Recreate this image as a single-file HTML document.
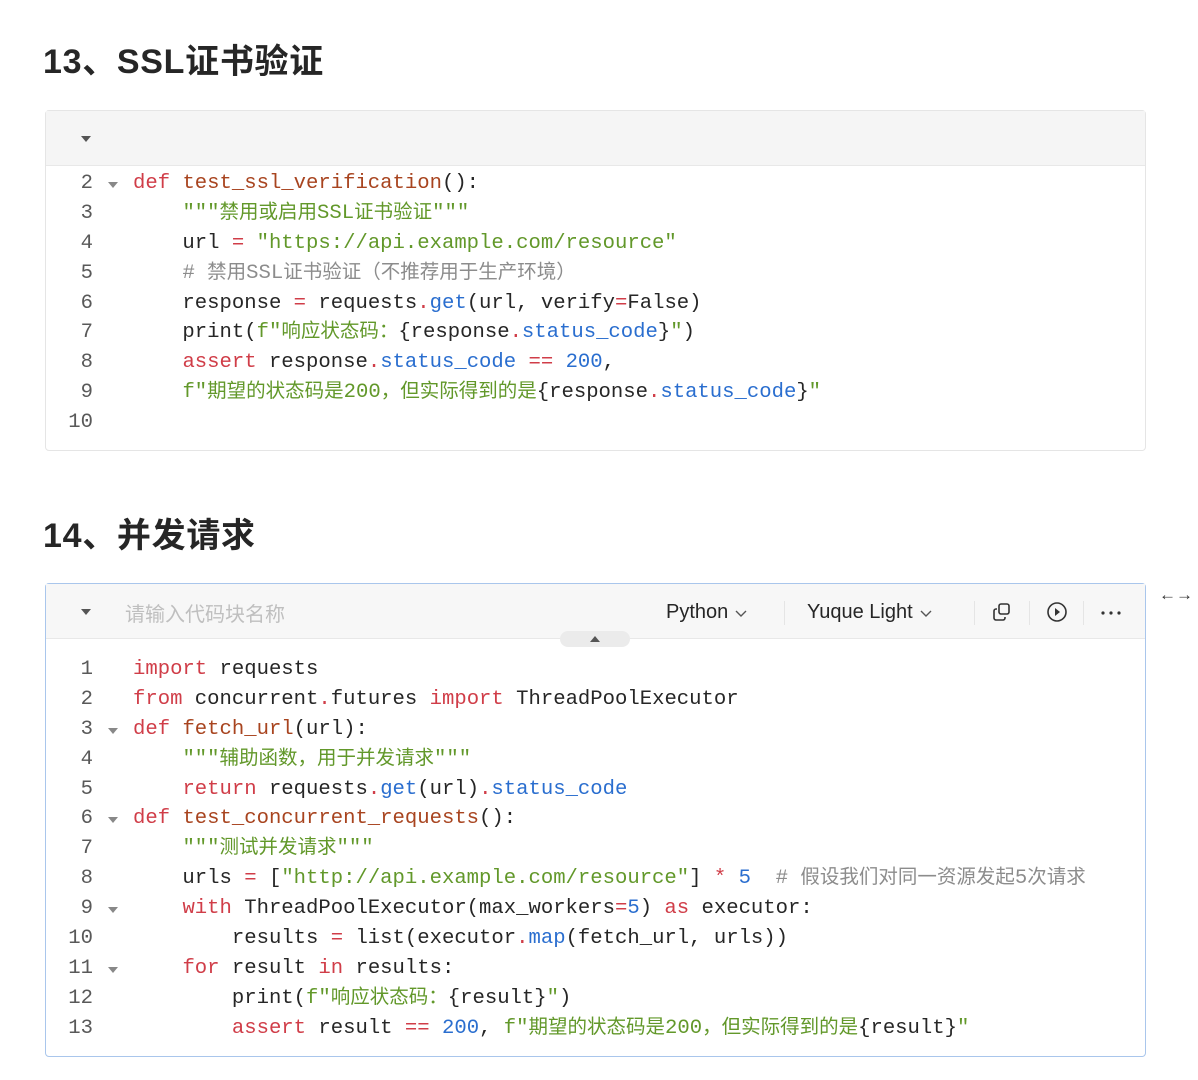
<!DOCTYPE html>
<html><head><meta charset="utf-8"><style>
*{margin:0;padding:0;box-sizing:border-box}
body{width:1198px;height:1080px;background:#fff;position:relative;overflow:hidden;font-family:"Liberation Sans","Noto Sans CJK SC",sans-serif;color:#262626}
h2{position:absolute;left:43px;font-size:34px;font-weight:bold;letter-spacing:0.7px}
.blk{position:absolute;left:45px;width:1101px;border:1px solid #e5e5e5;border-radius:4px;background:#fff}
.hd{height:55px;background:#f5f5f5;border-bottom:1px solid #e8e8e8;position:relative}
.tri{position:absolute;left:35px;top:25px;width:0;height:0;border-left:5px solid transparent;border-right:5px solid transparent;border-top:6px solid #555}
.code{font-family:"Liberation Mono","Noto Sans CJK SC",monospace;font-size:20.6px;position:relative}
.ln{height:29.9px;line-height:29.9px;position:relative;white-space:pre}
.n{position:absolute;left:0;width:47px;text-align:right;color:#595959}
.f{position:absolute;left:62px;top:13px;border-left:5px solid transparent;border-right:5px solid transparent;border-top:6px solid #888}
.t{position:absolute;left:87px;color:#262626}
.k{color:#d03d48}.fn{color:#a8441f}.s{color:#62982a}.b{color:#2a6ecf}.c{color:#8c8c8c}
.cj{font-family:"Noto Sans CJK SC",sans-serif;font-size:19.5px;line-height:1}
.chev{display:inline-block;vertical-align:middle;margin-left:6px}
</style></head><body>
<h2 style="top:34px">13、SSL证书验证</h2>
<div class="blk" style="top:110px;height:341px">
<div class="hd"><div class="tri"></div></div>
<div class="code" style="padding-top:3px"><div class="ln"><span class="n">2</span><span class="f"></span><span class="t"><span class="k">def</span> <span class="fn">test_ssl_verification</span>():</span></div><div class="ln"><span class="n">3</span><span class="t">    <span class="s">"""<span class="cj">禁用或启用</span>SSL<span class="cj">证书验证</span>"""</span></span></div><div class="ln"><span class="n">4</span><span class="t">    url <span class="k">=</span> <span class="s">"https://api.example.com/resource"</span></span></div><div class="ln"><span class="n">5</span><span class="t">    <span class="c"># <span class="cj">禁用</span>SSL<span class="cj">证书验证（不推荐用于生产环境）</span></span></span></div><div class="ln"><span class="n">6</span><span class="t">    response <span class="k">=</span> requests<span class="k">.</span><span class="b">get</span>(url, verify<span class="k">=</span>False)</span></div><div class="ln"><span class="n">7</span><span class="t">    print(<span class="s">f"<span class="cj">响应状态码：</span></span>{response<span class="k">.</span><span class="b">status_code</span>}<span class="s">"</span>)</span></div><div class="ln"><span class="n">8</span><span class="t">    <span class="k">assert</span> response<span class="k">.</span><span class="b">status_code</span> <span class="k">==</span> <span class="b">200</span>,</span></div><div class="ln"><span class="n">9</span><span class="t">    <span class="s">f"<span class="cj">期望的状态码是</span>200<span class="cj">，但实际得到的是</span></span>{response<span class="k">.</span><span class="b">status_code</span>}<span class="s">"</span></span></div><div class="ln"><span class="n">10</span></div></div></div>

<h2 style="top:508px">14、并发请求</h2>
<div class="blk" style="top:583px;height:474px;border-color:#a9c6ec">
<div class="hd" style="background:#f7f7f7">
<div class="tri"></div>
<div style="position:absolute;left:79px;top:14px;font-size:20px;color:#bfbfbf">请输入代码块名称</div>
<div style="position:absolute;left:620px;top:16px;font-size:20px;line-height:24px;color:#262626">Python<svg class="chev" width="14" height="10" viewBox="0 0 14 10"><path d="M2 3l5 5 5-5" fill="none" stroke="#555" stroke-width="1.4"/></svg></div>
<div style="position:absolute;left:738px;top:17px;width:1px;height:24px;background:#e5e5e5"></div>
<div style="position:absolute;left:761px;top:16px;font-size:20px;line-height:24px;color:#262626">Yuque Light<svg class="chev" width="14" height="10" viewBox="0 0 14 10"><path d="M2 3l5 5 5-5" fill="none" stroke="#555" stroke-width="1.4"/></svg></div>
<div style="position:absolute;left:928px;top:17px;width:1px;height:24px;background:#e5e5e5"></div>
<svg style="position:absolute;left:946px;top:18px" width="20" height="20" viewBox="0 0 20 20" fill="none" stroke="#333" stroke-width="1.6"><rect x="7" y="2" width="10" height="10" rx="2"/><path d="M5 7H4a2 2 0 0 0-2 2v7a2 2 0 0 0 2 2h7a2 2 0 0 0 2-2v-1"/></svg>
<div style="position:absolute;left:983px;top:17px;width:1px;height:24px;background:#e5e5e5"></div>
<svg style="position:absolute;left:1000px;top:17px" width="22" height="22" viewBox="0 0 22 22"><circle cx="11" cy="11" r="9" fill="none" stroke="#333" stroke-width="1.6"/><path d="M9 7l5 4-5 4z" fill="#333"/></svg>
<div style="position:absolute;left:1037px;top:17px;width:1px;height:24px;background:#e5e5e5"></div>
<svg style="position:absolute;left:1054px;top:26px" width="22" height="6" viewBox="0 0 22 6"><circle cx="3" cy="3" r="1.6" fill="#333"/><circle cx="11" cy="3" r="1.6" fill="#333"/><circle cx="19" cy="3" r="1.6" fill="#333"/></svg>
<div style="position:absolute;left:514px;top:47px;width:70px;height:16px;border-radius:8px;background:#ebebeb"><div style="position:absolute;left:30px;top:5px;border-left:5px solid transparent;border-right:5px solid transparent;border-bottom:6px solid #555"></div></div>
</div>
<div class="code" style="padding-top:16px"><div class="ln"><span class="n">1</span><span class="t"><span class="k">import</span> requests</span></div><div class="ln"><span class="n">2</span><span class="t"><span class="k">from</span> concurrent<span class="k">.</span>futures <span class="k">import</span> ThreadPoolExecutor</span></div><div class="ln"><span class="n">3</span><span class="f"></span><span class="t"><span class="k">def</span> <span class="fn">fetch_url</span>(url):</span></div><div class="ln"><span class="n">4</span><span class="t">    <span class="s">"""<span class="cj">辅助函数，用于并发请求</span>"""</span></span></div><div class="ln"><span class="n">5</span><span class="t">    <span class="k">return</span> requests<span class="k">.</span><span class="b">get</span>(url)<span class="k">.</span><span class="b">status_code</span></span></div><div class="ln"><span class="n">6</span><span class="f"></span><span class="t"><span class="k">def</span> <span class="fn">test_concurrent_requests</span>():</span></div><div class="ln"><span class="n">7</span><span class="t">    <span class="s">"""<span class="cj">测试并发请求</span>"""</span></span></div><div class="ln"><span class="n">8</span><span class="t">    urls <span class="k">=</span> [<span class="s">"http://api.example.com/resource"</span>] <span class="k">*</span> <span class="b">5</span>  <span class="c"># <span class="cj">假设我们对同一资源发起</span>5<span class="cj">次请求</span></span></span></div><div class="ln"><span class="n">9</span><span class="f"></span><span class="t">    <span class="k">with</span> ThreadPoolExecutor(max_workers<span class="k">=</span><span class="b">5</span>) <span class="k">as</span> executor:</span></div><div class="ln"><span class="n">10</span><span class="t">        results <span class="k">=</span> list(executor<span class="k">.</span><span class="b">map</span>(fetch_url, urls))</span></div><div class="ln"><span class="n">11</span><span class="f"></span><span class="t">    <span class="k">for</span> result <span class="k">in</span> results:</span></div><div class="ln"><span class="n">12</span><span class="t">        print(<span class="s">f"<span class="cj">响应状态码：</span></span>{result}<span class="s">"</span>)</span></div><div class="ln"><span class="n">13</span><span class="t">        <span class="k">assert</span> result <span class="k">==</span> <span class="b">200</span>, <span class="s">f"<span class="cj">期望的状态码是</span>200<span class="cj">，但实际得到的是</span></span>{result}<span class="s">"</span></span></div></div></div>
<div style="position:absolute;left:1159px;top:585px;font-size:17px;color:#333">&#8592;&#8594;</div>
</body></html>
